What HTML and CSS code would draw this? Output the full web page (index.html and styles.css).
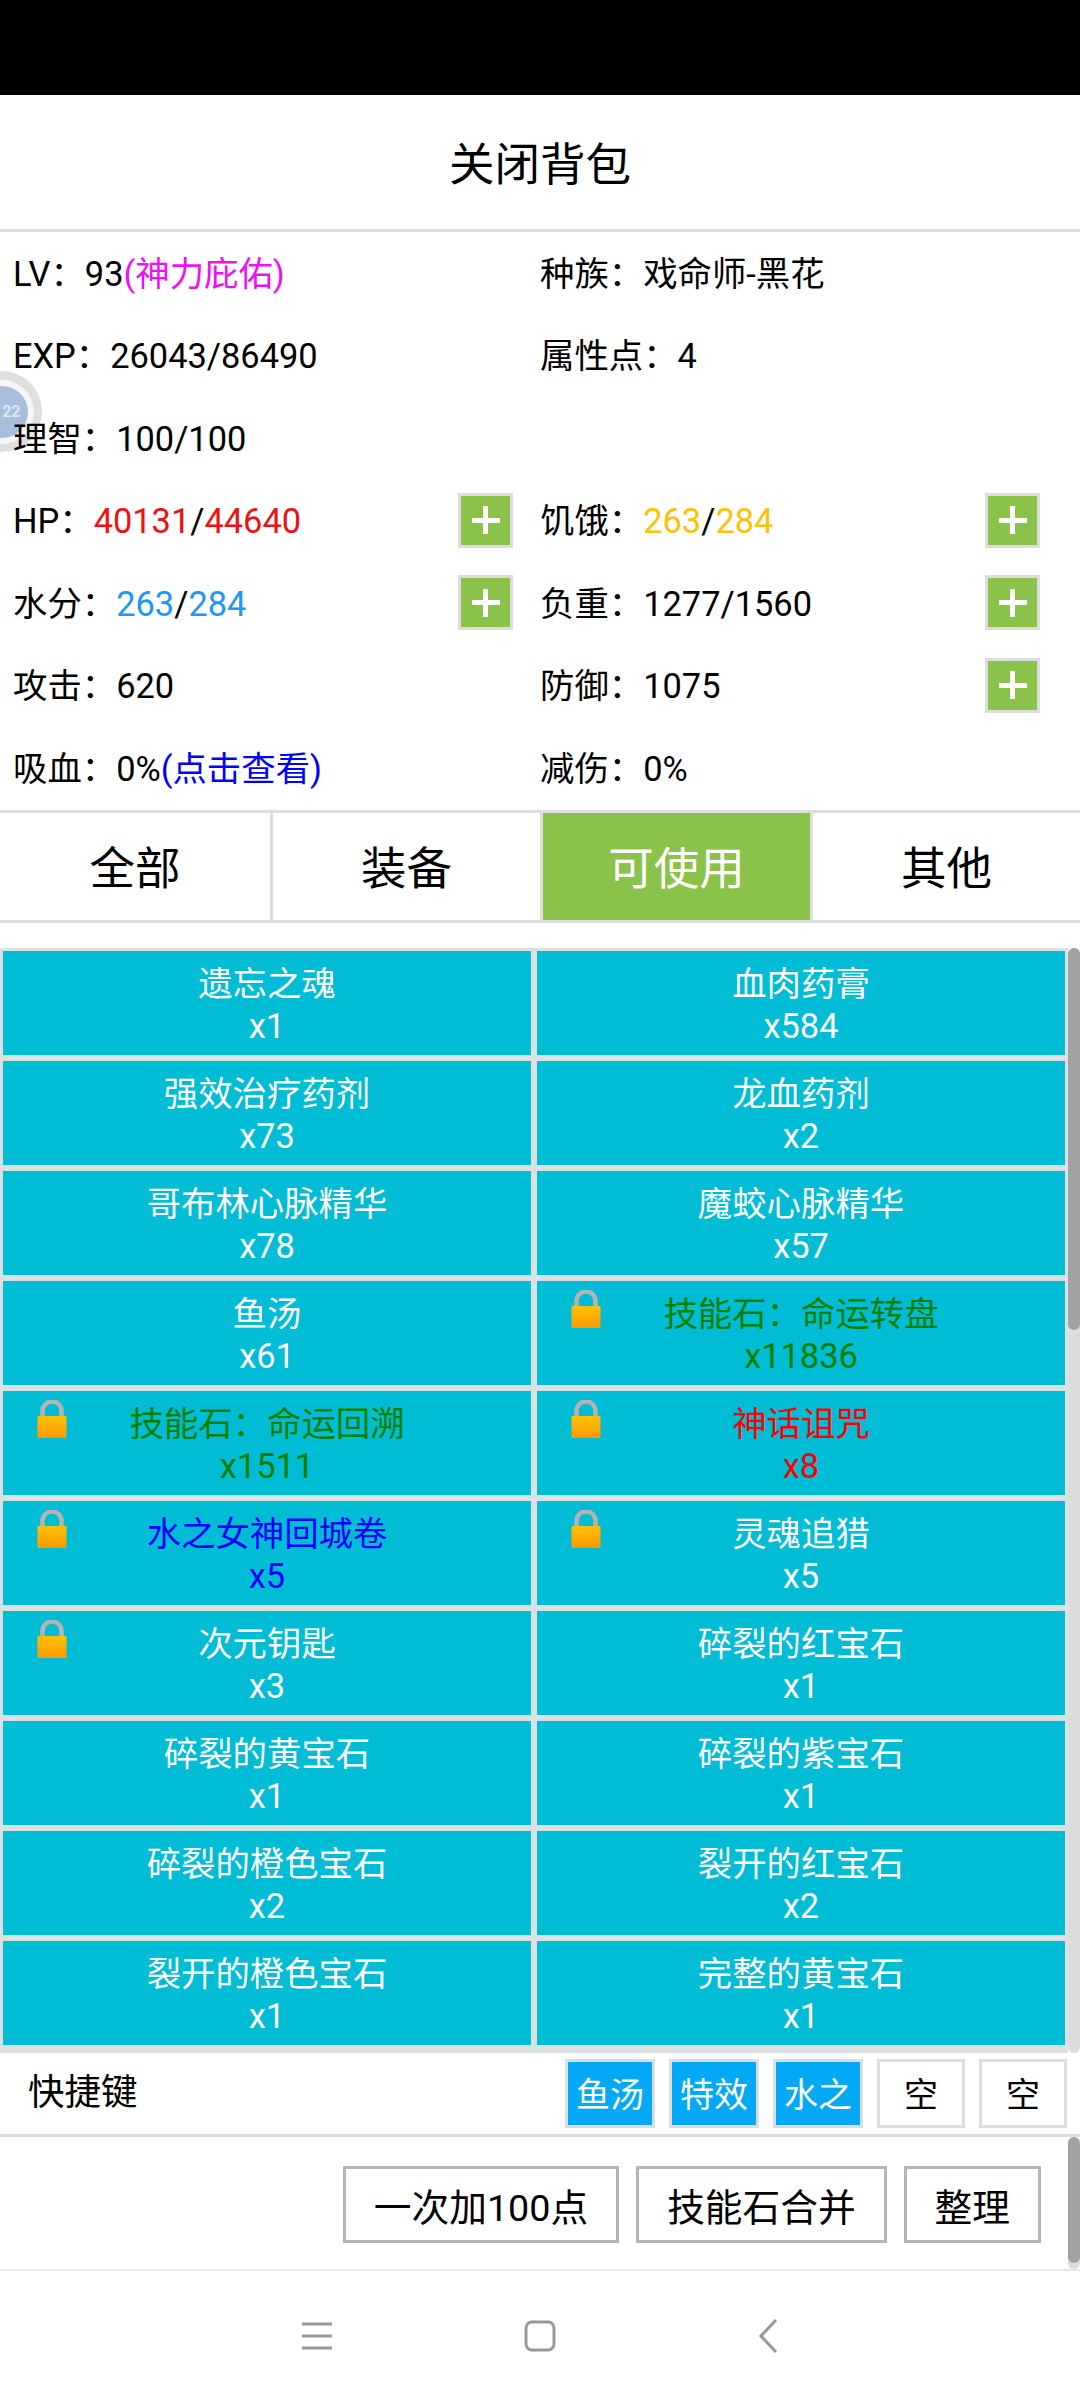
FILE: index.html
```html
<!DOCTYPE html>
<html lang="en">
<head>
    <meta charset="UTF-8">
    <meta name="viewport" content="width=device-width, initial-scale=1.0">
    <title>背包</title>
    <link rel="stylesheet" href="styles.css">
</head>
<body>

    <div class="status-bar"></div>

    <div class="title">关闭背包</div>

    <div class="stats">
        <div class="stat">LV：93<span class="magenta">(神力庇佑)</span></div>
        <div class="stat">种族：戏命师-黑花</div>
        <div class="stat">EXP：26043/86490</div>
        <div class="stat">属性点：4</div>
        <div class="stat">理智：100/100</div>
        <div class="stat"></div>
        <div class="stat">HP：<span class="red">40131</span>/<span class="red">44640</span><span class="plus"></span></div>
        <div class="stat">饥饿：<span class="amber">263</span>/<span class="amber">284</span><span class="plus"></span></div>
        <div class="stat">水分：<span class="sky">263</span>/<span class="sky">284</span><span class="plus"></span></div>
        <div class="stat">负重：1277/1560<span class="plus"></span></div>
        <div class="stat">攻击：620</div>
        <div class="stat">防御：1075<span class="plus"></span></div>
        <div class="stat">吸血：0%<span class="blue">(点击查看)</span></div>
        <div class="stat">减伤：0%</div>
    </div>

    <div class="float-ball"><span>22</span></div>

    <div class="tabs">
        <div class="tab">全部</div>
        <div class="tab">装备</div>
        <div class="tab active">可使用</div>
        <div class="tab">其他</div>
    </div>

    <div class="list-wrap">
        <div class="items" id="items"></div>
        <div class="scroll list-scroll"><div class="thumb"></div></div>
    </div>

    <div class="shortcuts">
        <div class="shortcut-label">快捷键</div>
        <div class="key used">鱼汤</div>
        <div class="key used">特效</div>
        <div class="key used">水之</div>
        <div class="key">空</div>
        <div class="key">空</div>
    </div>

    <div class="actions">
        <button>一次加100点</button>
        <button>技能石合并</button>
        <button>整理</button>
        <div class="scroll action-scroll"><div class="thumb"></div></div>
    </div>

    <div class="nav">
        <svg width="30" height="28" viewBox="0 0 30 28"><path d="M0 2h30M0 14h30M0 26h30" stroke="#999" stroke-width="3" fill="none"/></svg>
        <svg width="32" height="32" viewBox="0 0 32 32"><rect x="2" y="2" width="28" height="28" rx="6" stroke="#999" stroke-width="3" fill="none"/></svg>
        <svg class="back" width="20" height="34" viewBox="0 0 20 34"><path d="M18 1L3 17l15 16" stroke="#999" stroke-width="3" fill="none"/></svg>
    </div>

    <script>
        const items = [
            ["遗忘之魂", "x1"], ["血肉药膏", "x584"],
            ["强效治疗药剂", "x73"], ["龙血药剂", "x2"],
            ["哥布林心脉精华", "x78"], ["魔蛟心脉精华", "x57"],
            ["鱼汤", "x61"], ["技能石：命运转盘", "x11836", "green", true],
            ["技能石：命运回溯", "x1511", "green", true], ["神话诅咒", "x8", "red", true],
            ["水之女神回城卷", "x5", "blue", true], ["灵魂追猎", "x5", "", true],
            ["次元钥匙", "x3", "", true], ["碎裂的红宝石", "x1"],
            ["碎裂的黄宝石", "x1"], ["碎裂的紫宝石", "x1"],
            ["碎裂的橙色宝石", "x2"], ["裂开的红宝石", "x2"],
            ["裂开的橙色宝石", "x1"], ["完整的黄宝石", "x1"]
        ];

        const lockIcon = '<svg class="lock" width="30" height="38" viewBox="0 0 30 38">' +
            '<defs><linearGradient id="lockFill" x1="0" y1="0" x2="0" y2="1">' +
            '<stop offset="0" stop-color="#ffc107"/><stop offset="1" stop-color="#ff9800"/></linearGradient></defs>' +
            '<path d="M5.5 17V11a9.5 9.5 0 0 1 19 0v6" stroke="#b4b4b2" stroke-width="4.5" fill="none"/>' +
            '<rect x="0.5" y="16" width="29" height="22" rx="1" fill="url(#lockFill)"/></svg>';

        const list = document.getElementById("items");
        items.forEach(item => {
            const div = document.createElement("div");
            div.className = "item " + (item[2] || "");
            div.innerHTML = (item[3] ? lockIcon : "") + `<div>${item[0]}</div><div>${item[1]}</div>`;
            list.appendChild(div);
        });
    </script>

</body>
</html>
```
FILE: styles.css
```css
* {
    box-sizing: border-box;
}
body {
    margin: 0;
    width: 1080px;
    height: 2400px;
    overflow: hidden;
    position: relative;
    background-color: #fff;
    color: #000;
    font-family: Roboto, "Noto Sans CJK SC", sans-serif;
    font-size: 34.4px;
}
.status-bar {
    height: 95px;
    background-color: #000;
}
.title {
    height: 137px;
    border-bottom: 3px solid #ddd;
    padding-bottom: 3px;
    display: flex;
    align-items: center;
    justify-content: center;
    font-size: 45.5px;
}
.stats {
    display: grid;
    grid-template-columns: 527px 527px;
    grid-auto-rows: 82.5px;
    padding-left: 13px;
    height: 578px;
}
.stat {
    padding-top: 2.5px;
    line-height: 78px;
    white-space: pre;
    position: relative;
}
.plus {
    position: absolute;
    right: 27px;
    top: 13px;
    width: 55px;
    height: 55px;
    border: 3px solid #ddd;
    background: linear-gradient(#fff, #fff) center / 28px 5px no-repeat,
                linear-gradient(#fff, #fff) center / 5px 28px no-repeat,
                #8bc34a;
}
.magenta { color: #ee11f5; }
.red { color: #ee1111; }
.amber { color: #ffc107; }
.sky { color: #2196f3; }
.blue { color: #00f; }
.float-ball {
    position: absolute;
    left: -39px;
    top: 371px;
    width: 81px;
    height: 81px;
    border-radius: 50%;
    background-color: #dfdfdf;
    display: flex;
    align-items: center;
    justify-content: center;
    z-index: -1;
}
.float-ball span {
    width: 52px;
    height: 52px;
    border-radius: 50%;
    background-color: #a7bfdc;
    box-shadow: 0 0 0 6px #f5f7fa;
    color: #dfe6ee;
    font-size: 16px;
    font-weight: 700;
    display: flex;
    align-items: center;
    justify-content: flex-end;
    padding-right: 7px;
}
.tabs {
    display: flex;
    height: 113px;
    border-top: 3px solid #ddd;
    border-bottom: 3px solid #ddd;
}
.tab {
    width: 270.5px;
    padding-bottom: 3px;
    display: flex;
    align-items: center;
    justify-content: center;
    font-size: 45.5px;
    border-left: 3px solid #ddd;
}
.tab:first-child {
    border-left: none;
}
.tab.active {
    background-color: #8bc34a;
    color: #fff;
}
.list-wrap {
    margin-top: 25px;
    height: 1105px;
    display: flex;
}
.items {
    width: 1068px;
    height: 1105px;
    padding: 3px;
    background-color: #dbe0e2;
    display: grid;
    grid-template-columns: 528px 528px;
    grid-auto-rows: 104px;
    gap: 6px;
    align-content: start;
}
.item {
    background-color: #00bcd4;
    color: #fff;
    text-align: center;
    padding-top: 12px;
    line-height: 42px;
    position: relative;
}
.item.green { color: #008000; }
.item.red { color: #f00; }
.item.blue { color: #00f; }
.lock {
    position: absolute;
    left: 34px;
    top: 9px;
}
.scroll {
    width: 12px;
    background-color: #dcdcdc;
    border-radius: 6px;
}
.thumb {
    width: 100%;
    background-color: #a2a2a2;
    border-radius: 6px;
}
.list-scroll .thumb {
    height: 382px;
}
.shortcuts {
    height: 84px;
    border-bottom: 3px solid #ddd;
    display: flex;
    align-items: center;
    padding: 0 13px 0 28px;
    gap: 14px;
}
.shortcut-label {
    font-size: 36.5px;
    margin-right: auto;
    margin-bottom: 8px;
}
.key {
    min-width: 88px;
    height: 69px;
    padding: 0 8px 2px;
    border: 3px solid #ddd;
    font-size: 34px;
    display: flex;
    align-items: center;
    justify-content: center;
}
.key.used {
    background-color: #03a9f4;
    color: #fff;
}
.actions {
    height: 134px;
    border-bottom: 2px solid #e6e6e6;
    display: flex;
    align-items: center;
    justify-content: flex-end;
    padding-top: 3px;
    padding-right: 39px;
    gap: 17px;
    position: relative;
}
button {
    height: 77px;
    padding: 0 28px;
    border: 3px solid #b5b5b5;
    background-color: #fff;
    font-family: inherit;
    font-size: 37.7px;
    color: #000;
}
.action-scroll {
    position: absolute;
    right: 0;
    top: 0;
    height: 132px;
}
.action-scroll .thumb {
    height: 126px;
}
.nav {
    height: 130px;
    display: flex;
    align-items: center;
    gap: 192px;
    padding-left: 302px;
}
.back {
    margin-left: 10px;
}
```
